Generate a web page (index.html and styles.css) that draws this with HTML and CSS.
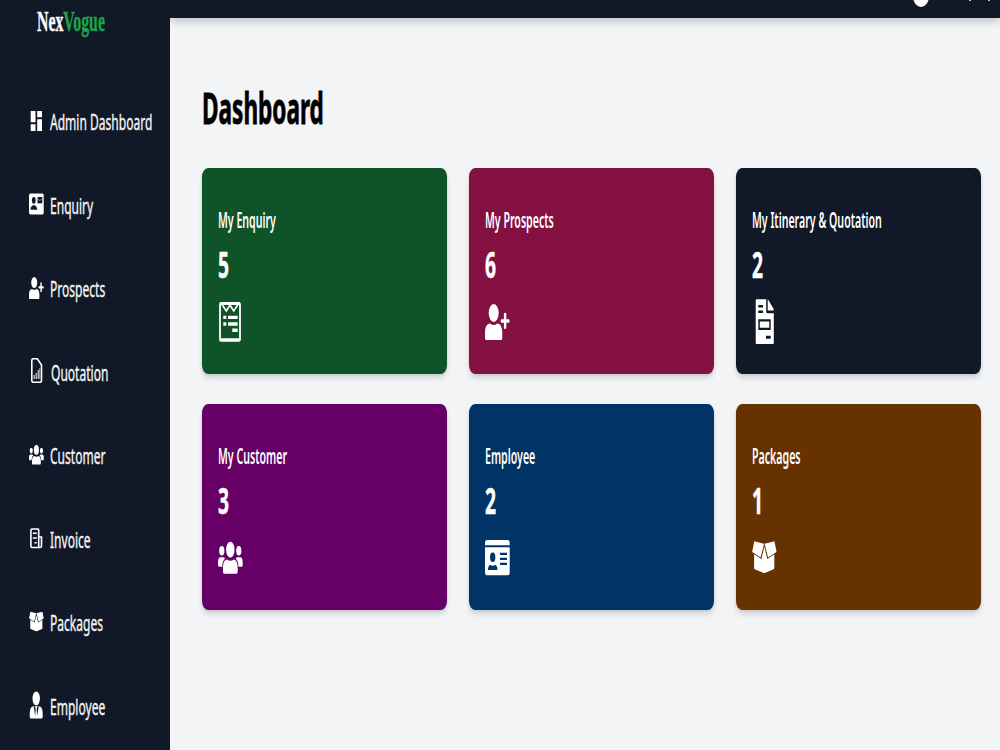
FILE: index.html
```html
<!DOCTYPE html>
<html lang="en">
<head>
    <meta charset="UTF-8">
    <meta name="viewport" content="width=device-width, initial-scale=1.0">
    <title>NexVogue - Dashboard</title>
    <link rel="stylesheet" href="styles.css">
</head>
<body>
<!-- icons used both in the sidebar and in the cards -->
<svg class="sprite">
    <symbol id="icon-user-plus" viewBox="0 0 25 46" preserveAspectRatio="none">
        <ellipse cx="8.7" cy="14" rx="5" ry="9"/>
        <path d="M0 39V34C0 28 2 24.5 5 24.5Q8.7 27.500 12.300 24.500C15.500 24.500 17.300 28 17.300 34V39Q17.300 41 16 41H1.300Q0 41 0 39Z"/>
        <path d="M18.900 14.500Q18.900 13.700 20.100 13.700T21.300 14.500V20.200H24Q24.500 20.200 24.500 22T24 23.800H21.300V29.200Q21.300 30 20.100 30T18.900 29.200V23.800H16.200Q15.700 23.800 15.700 22T16.200 20.200H18.900Z"/>
    </symbol>
    <symbol id="icon-users" viewBox="0 0 25 46" preserveAspectRatio="none">
        <ellipse cx="12.300" cy="14.700" rx="4.200" ry="8"/>
        <ellipse cx="3.800" cy="15.800" rx="2.600" ry="4.700"/>
        <ellipse cx="20.800" cy="15.800" rx="2.600" ry="4.700"/>
        <path d="M5 36.500V33C5 28 6.500 24.500 9 24.500Q12.300 27 15.700 24.500C18.200 24.500 19.700 28 19.700 33V36.500Q19.700 38.700 18.500 38.700H6.200Q5 38.700 5 36.500Z"/>
        <path d="M0 30V27.500Q0 22.300 2.500 22.300H5Q6.300 22.300 7 23.600Q4.500 26 4.200 31.700H1Q0 31.700 0 30Z"/>
        <path d="M24.700 30V27.500Q24.700 22.300 22.200 22.300H19.700Q18.400 22.300 17.700 23.600Q20.200 26 20.500 31.700H23.700Q24.700 31.700 24.700 30Z"/>
    </symbol>
    <symbol id="icon-box" viewBox="0 0 25 46" preserveAspectRatio="none">
        <path d="M2.300 6.300L12.100 8.700L8.900 21.600Q8.600 22.400 8 22L.6 17.200Q.1 16.900 .3 16Z"/>
        <path d="M22.400 6.300L12.600 8.700L15.800 21.600Q16.100 22.400 16.700 22L24.100 17.200Q24.600 16.900 24.400 16Z"/>
        <path d="M2.100 19.300L9.400 24L12.350 11.500L15.300 24L22.300 19.300V33Q22.300 34 21.700 34.300L12.800 38Q12.300 38.200 11.800 38L2.700 34.300Q2.100 34 2.100 33Z"/>
    </symbol>
</svg>

<div class="layout">
    <aside class="sidebar">
        <div class="logo"><span class="squeeze">Nex<span class="green">Vogue</span></span></div>
        <nav class="menu">
            <a class="menu-item">
                <svg class="menu-icon" viewBox="0 0 15 28">
                    <path d="M1.700 4h4.800v11.300H1.700zM1.700 17.300h4.800V24H1.700zM8.200 4H13v6.300H8.200zM8.200 12.300H13V24H8.200z"/>
                </svg>
                <span class="squeeze">Admin Dashboard</span>
            </a>
            <a class="menu-item">
                <svg class="menu-icon" viewBox="0 0 15 28">
                    <rect x="0" y="3.500" width="14.700" height="21" rx="1.300" ry="2"/>
                    <ellipse class="hole" cx="4.800" cy="10.300" rx="1.900" ry="3.400"/>
                    <path class="hole" d="M1.500 19.800Q1.800 15.300 4.800 15.300T8.300 19.800Z"/>
                    <path class="hole" d="M8.500 7H13.300V13.300H8.500Z"/>
                    <path class="thin" d="M8.700 8.300L10.900 10.800L13.100 8.300"/>
                </svg>
                <span class="squeeze">Enquiry</span>
            </a>
            <a class="menu-item">
                <svg class="menu-icon"><use href="#icon-user-plus"/></svg>
                <span class="squeeze">Prospects</span>
            </a>
            <a class="menu-item shifted">
                <svg class="menu-icon" viewBox="0 0 15 28">
                    <path class="line" d="M4 1.700H8.300L12.500 8V23Q12.500 25.300 11 25.300H4.200Q2.800 25.300 2.800 23V4Q2.800 1.700 4 1.700Z"/>
                    <path class="faded" d="M4.500 18h1.500v4H4.500zM6.500 16h1.500v6H6.500zM8.500 13h1.500v9H8.500zM10.300 11h1v11h-1z"/>
                </svg>
                <span class="squeeze">Quotation</span>
            </a>
            <a class="menu-item">
                <svg class="menu-icon"><use href="#icon-users"/></svg>
                <span class="squeeze">Customer</span>
            </a>
            <a class="menu-item">
                <svg class="menu-icon" viewBox="0 0 15 28">
                    <path class="line" d="M2.800 5H9Q9.700 5 9.700 6V23.500H3Q1.900 23.500 1.900 21.500V6.500Q1.900 5 2.800 5ZM9.700 13H12.500V21.500Q12.500 23.500 11 23.500H9.700"/>
                    <path class="line" d="M3.800 9.300H7.800M3.800 14H7.800M5.500 18.700H7.800"/>
                </svg>
                <span class="squeeze">Invoice</span>
            </a>
            <a class="menu-item">
                <svg class="menu-icon"><use href="#icon-box"/></svg>
                <span class="squeeze">Packages</span>
            </a>
            <a class="menu-item">
                <svg class="menu-icon" viewBox="0 0 15 28">
                    <ellipse cx="7.200" cy="7.500" rx="3.700" ry="6.900"/>
                    <path d="M.7 25.500V23C.7 18 2.300 15.300 4.500 15.300H9.900C12.100 15.300 13.700 18 13.700 23V25.500Q13.700 27.500 12.600 27.500H1.800Q.7 27.500 .7 25.500Z"/>
                    <path class="hole" d="M4.700 15.300L6.200 25L6.700 18.500L6 15.300ZM9.700 15.300L8.200 25L7.700 18.500L8.400 15.300Z"/>
                </svg>
                <span class="squeeze">Employee</span>
            </a>
        </nav>
    </aside>

    <div class="page">
        <header class="topbar">
            <span class="avatar"></span>
            <span class="tick"></span>
            <span class="tick"></span>
        </header>
        <main class="content">
            <h1><span class="squeeze">Dashboard</span></h1>
            <div class="cards">
                <div class="card enquiry">
                    <h2><span class="squeeze">My Enquiry</span></h2>
                    <p><span class="squeeze">5</span></p>
                    <svg class="card-icon" viewBox="0 0 25 46">
                        <path fill-rule="evenodd" d="M3 3H21Q22.900 3 22.900 6V39.700Q22.900 42.700 21 42.700H3Q1.100 42.700 1.100 39.700V6Q1.100 3 3 3ZM2.900 6V39.300H21.100V6Z"/>
                        <path class="line" d="M4 5.500L8.300 12L12 6L15.700 12L20 5.500"/>
                        <path d="M5.300 16.700h3V20h-3zM10 16.700h9.700V20H10zM5.300 23.300h3v3.400h-3zM10 23.300h9.700v3.400H10zM14.300 29.600h5.400V33h-5.400z"/>
                    </svg>
                </div>
                <div class="card prospects">
                    <h2><span class="squeeze">My Prospects</span></h2>
                    <p><span class="squeeze">6</span></p>
                    <svg class="card-icon"><use href="#icon-user-plus"/></svg>
                </div>
                <div class="card quotation">
                    <h2><span class="squeeze">My Itinerary &amp; Quotation</span></h2>
                    <p><span class="squeeze">2</span></p>
                    <svg class="card-icon" viewBox="0 0 25 46">
                        <path fill-rule="evenodd" d="M4.500 .3H14.200V12.500Q14.200 14.300 15.300 14.300H21.800V43.500Q21.800 45 21 45H4.500Q3.700 45 3.700 43.500V2Q3.700 .3 4.500 .3ZM6.300 6V8.500H11V6ZM6.300 11.600V14.100H11V11.600ZM6.300 20.300V31H18.700V20.300ZM14 36.700V39.700H18.700V36.700Z"/>
                        <path d="M15.700 .3Q16.200 .6 16.500 1.200L21.500 9.800L21.800 11.500H15.700ZM7.800 22.600V28.700H17.200V22.600Z"/>
                    </svg>
                </div>
                <div class="card customer">
                    <h2><span class="squeeze">My Customer</span></h2>
                    <p><span class="squeeze">3</span></p>
                    <svg class="card-icon"><use href="#icon-users"/></svg>
                </div>
                <div class="card employee">
                    <h2><span class="squeeze">Employee</span></h2>
                    <p><span class="squeeze">2</span></p>
                    <svg class="card-icon" viewBox="0 0 25 46">
                        <path d="M0 10.300V7.500Q0 5 1.800 5H22.900Q24.700 5 24.700 7.500V10.300Z"/>
                        <path fill-rule="evenodd" d="M0 12.300H24.700V37.800Q24.700 40.300 22.900 40.300H1.800Q0 40.300 0 37.800ZM5 22.300A2.700 4.800 0 0 0 10.400 22.300A2.700 4.800 0 0 0 5 22.300ZM3 35H12.400Q12.400 30 9.800 30L7.700 31L5.600 30Q3 30 3 35ZM15 17.700V20H22V17.700ZM15 22.700V25H22V22.700ZM15 27.700V30H22V27.700Z"/>
                    </svg>
                </div>
                <div class="card packages">
                    <h2><span class="squeeze">Packages</span></h2>
                    <p><span class="squeeze">1</span></p>
                    <svg class="card-icon"><use href="#icon-box"/></svg>
                </div>
            </div>
        </main>
    </div>
</div>
</body>
</html>
```
FILE: styles.css
```css
* {
    margin: 0;
    padding: 0;
    box-sizing: border-box;
}

body {
    background: #f3f4f6;
    font-family: "Noto Sans", "Open Sans", sans-serif;
    overflow: hidden;
}

.sprite {
    display: none;
}

.layout {
    display: flex;
    height: 750px;
    overflow: hidden;
}

/* condensed lettering */
.squeeze {
    display: inline-block;
    white-space: nowrap;
    transform: scaleX(0.535);
    transform-origin: left center;
}

/* sidebar */
.sidebar {
    flex: none;
    width: 170px;
    background: #111827;
    color: #fff;
}

.logo {
    height: 79px;
    padding: 3px 0 0 37px;
    font: bold 29px/36px "Liberation Serif", serif;
    -webkit-text-stroke: 0.4px;
}

.logo .squeeze {
    transform: scaleX(0.545);
}

.green {
    color: #1fa34a;
}

.menu-item {
    display: flex;
    align-items: center;
    gap: 6px;
    height: 83.5px;
    padding-left: 29px;
    color: #f3f4f6;
    font-size: 22.5px;
    line-height: 30px;
}

.menu-item .squeeze {
    padding-top: 3px;
    -webkit-text-stroke: 0.4px;
}

.menu-item.shifted {
    gap: 7px;
}

.menu-icon {
    flex: none;
    width: 15px;
    height: 28px;
    fill: #fff;
}

.menu-icon .hole {
    fill: #111827;
}

.menu-icon .faded {
    fill: #a9adb5;
}

.menu-icon .thin {
    fill: none;
    stroke: #9ca3af;
    stroke-width: 0.8;
}

.line {
    fill: none;
    stroke: #fff;
    stroke-width: 1.6;
}

/* right side */
.page {
    flex: 1;
    min-width: 0;
}

.topbar {
    display: flex;
    justify-content: flex-end;
    height: 18px;
    padding-right: 10px;
    background: #111827;
    box-shadow: 0 3px 10px rgba(0, 0, 0, 0.22);
    clip-path: inset(0 0 -20px 0);
}

.avatar {
    width: 16px;
    height: 22px;
    margin: -15px 31px 0 0;
    border-radius: 50%;
    background: #fff;
}

.tick {
    width: 2px;
    height: 1px;
    margin-left: 9px;
    background: #c5c8ce;
}

.tick + .tick {
    margin-left: 17px;
}

.content {
    padding: 60px 19px 0 32px;
}

h1 {
    height: 90px;
    font-size: 43px;
    line-height: 60px;
    color: #000;
    -webkit-text-stroke: 0.8px;
}

h1 .squeeze {
    transform: scaleX(0.525);
}

.cards {
    display: grid;
    grid-template-columns: repeat(3, 245px);
    grid-auto-rows: 206px;
    gap: 30px 22px;
}

.card {
    padding: 37px 16px 0;
    border-radius: 6px / 9px;
    color: #fff;
    box-shadow: 0 5px 5px rgba(0, 0, 0, 0.1), 0 1px 3px rgba(0, 0, 0, 0.1);
}

.card h2 {
    height: 31px;
    font-size: 21px;
    font-weight: 600;
    line-height: 31px;
}

.card h2 .squeeze {
    transform: scaleX(0.505);
}

.card p {
    height: 63px;
    padding-top: 5px;
    font-size: 36px;
    font-weight: bold;
    line-height: 48px;
    -webkit-text-stroke: 0.5px;
}

.card-icon {
    display: block;
    width: 25px;
    height: 46px;
    fill: #fff;
}

.enquiry {
    background: #0f5429;
}

.prospects {
    background: #831041;
}

.quotation {
    background: #111827;
}

.customer {
    background: #660066;
}

.employee {
    background: #003366;
}

.packages {
    background: #663300;
}
```
